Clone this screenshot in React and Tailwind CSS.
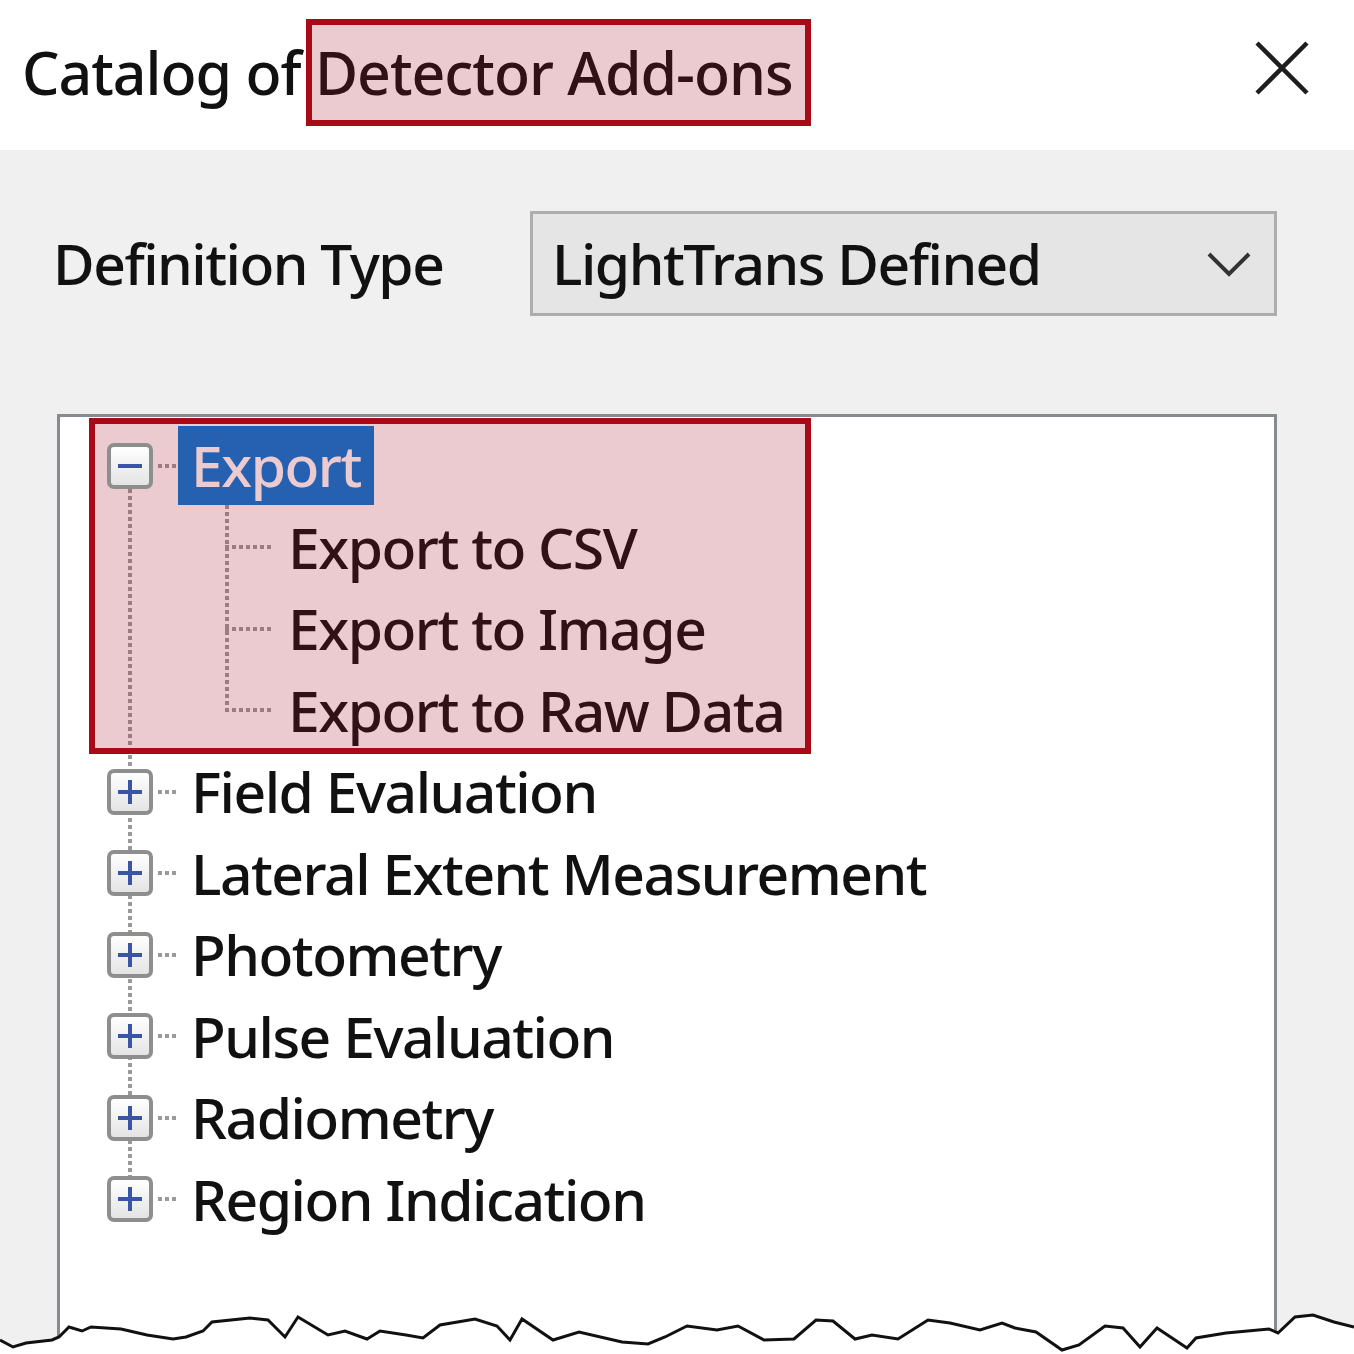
import React from 'react';

const FONT = "font-['Noto_Sans','Open_Sans',sans-serif]";

const groups = ['Field Evaluation', 'Lateral Extent Measurement', 'Photometry', 'Pulse Evaluation', 'Radiometry', 'Region Indication'];
const children = ['Export to CSV', 'Export to Image', 'Export to Raw Data'];

const tear = [
  [0, 1340], [13, 1347], [26, 1343], [52, 1340], [59, 1337], [69, 1327], [82, 1331], [91, 1327], [121, 1329], [147, 1335],
  [173, 1339], [186, 1337], [203, 1331], [212, 1322], [250, 1318], [268, 1320], [285, 1337], [298, 1317], [328, 1335],
  [345, 1331], [367, 1339], [380, 1331], [406, 1335], [423, 1338], [440, 1325], [475, 1319], [497, 1326], [510, 1340],
  [522, 1319], [553, 1340], [579, 1332], [622, 1342], [648, 1344], [665, 1337], [687, 1326], [717, 1330], [738, 1326],
  [764, 1340], [794, 1339], [816, 1320], [833, 1321], [855, 1339], [872, 1335], [898, 1339], [928, 1320], [950, 1323],
  [980, 1330], [1002, 1323], [1015, 1328], [1036, 1332], [1062, 1350], [1079, 1345], [1105, 1326], [1123, 1328],
  [1140, 1347], [1157, 1328], [1187, 1348], [1196, 1338], [1226, 1333], [1269, 1329], [1278, 1333], [1295, 1317],
  [1313, 1315], [1334, 1322], [1354, 1327],
];

function Toggle({ open }) {
  return (
    <div className="w-[46px] h-[46px] shrink-0 rounded-[7px] border-[4px] border-[#8e8e8e] bg-gradient-to-b from-white to-[#e4e4e4] flex items-center justify-center relative z-10">
      <svg width="24" height="24" viewBox="0 0 24 24">
        <rect x="0" y="10" width="24" height="4" fill="#3b55a6" />
        {!open && <rect x="10" y="0" width="4" height="24" fill="#3b55a6" />}
      </svg>
    </div>
  );
}

function HDots({ w }) {
  return <div className="h-[4px] bg-[repeating-linear-gradient(to_right,#9a9a9a_0_4px,transparent_4px_7px)]" style={{ width: w }} />;
}

const label = 'text-[57px] leading-none whitespace-nowrap font-medium tracking-[-1.5px]';

export default function App() {
  return (
    <div className={`relative w-[1354px] h-[1354px] overflow-hidden bg-white text-[#111] ${FONT}`}>
      {/* Title bar */}
      <div className="h-[150px] bg-white flex items-center justify-between pl-[22px] pr-[44px]">
        <div className="text-[59px] leading-none pb-[6px] whitespace-nowrap font-medium tracking-[-1px]">Catalog of Detector Add-ons</div>
        <svg className="mb-[14px]" width="56" height="56" viewBox="0 0 56 56">
          <path d="M3 3 L53 53 M53 3 L3 53" stroke="#1e1e1e" strokeWidth="4.5" />
        </svg>
      </div>

      {/* Body */}
      <div className="bg-[#f0f0f0] h-[1204px] pt-[61px] pl-[57px] pr-[77px]">
        <div className="flex items-center">
          <div className={`w-[477px] -ml-[4px] ${label}`}>Definition Type</div>
          <div className="w-[747px] h-[105px] border-[3px] border-[#adadad] bg-[#e5e5e5] flex items-center justify-between pl-[19px] pr-[22px]">
            <span className={label}>LightTrans Defined</span>
            <svg width="46" height="28" viewBox="0 0 46 28">
              <path d="M3 4 L23 24 L43 4" fill="none" stroke="#333" strokeWidth="4" />
            </svg>
          </div>
        </div>

        {/* Tree */}
        <div className="relative mt-[98px] w-[1220px] h-[1000px] bg-white border-[3px] border-[#868a91] pt-[8px]">
          {/* connector lines */}
          <div className="absolute left-[68px] top-[72px] w-[4px] h-[690px] bg-[repeating-linear-gradient(to_bottom,#9a9a9a_0_4px,transparent_4px_7px)]" />
          <div className="absolute left-[165px] top-[88px] w-[4px] h-[206px] bg-[repeating-linear-gradient(to_bottom,#9a9a9a_0_4px,transparent_4px_7px)]" />

          <div className="h-[81.5px] flex items-center pl-[47px]">
            <Toggle open />
            <div className="ml-[5px]"><HDots w={18} /></div>
            <div className={`ml-[2px] h-[79px] px-[13px] bg-[#0078d7] text-white flex items-center ${label}`}>Export</div>
          </div>
          {children.map((c) => (
            <div key={c} className="h-[81.5px] flex items-center pl-[165px]">
              <HDots w={46} />
              <span className={`ml-[17px] ${label}`}>{c}</span>
            </div>
          ))}
          {groups.map((g) => (
            <div key={g} className="h-[81.5px] flex items-center pl-[47px]">
              <Toggle />
              <div className="ml-[5px]"><HDots w={18} /></div>
              <span className={`ml-[15px] ${label}`}>{g}</span>
            </div>
          ))}
        </div>
      </div>

      {/* Highlight overlays */}
      <div className="absolute left-[306px] top-[19px] w-[505px] h-[107px] border-[6px] border-[#a80a18] bg-[rgba(170,20,40,0.22)]" />
      <div className="absolute left-[89px] top-[418px] w-[722px] h-[336px] border-[6px] border-[#a80a18] bg-[rgba(170,20,40,0.22)]" />

      {/* Torn edge */}
      <svg className="absolute left-0 top-0" width="1354" height="1354" viewBox="0 0 1354 1354">
        <polygon points={tear.map((p) => p.join(',')).join(' ') + ' 1354,1354 0,1354'} fill="white" />
        <polyline points={tear.map((p) => p.join(',')).join(' ')} fill="none" stroke="#111" strokeWidth="3" />
      </svg>
    </div>
  );
}
